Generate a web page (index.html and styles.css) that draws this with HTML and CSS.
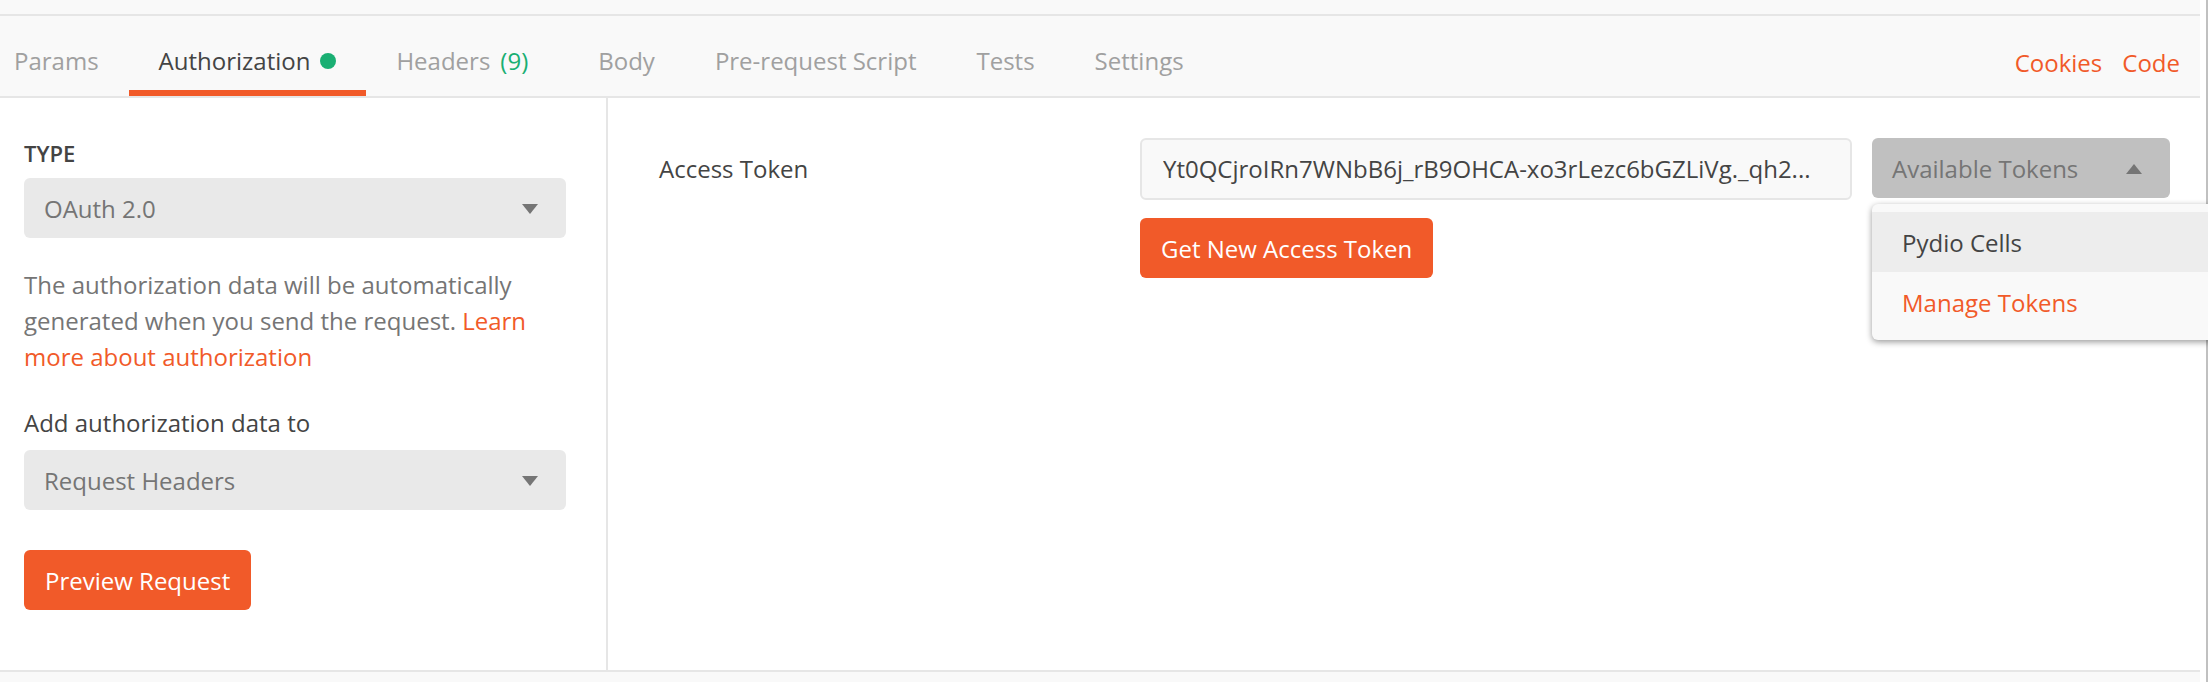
FILE: index.html
```html
<!DOCTYPE html>
<html lang="en">
<head>
<meta charset="utf-8">
<title>Authorization</title>
<link rel="stylesheet" href="styles.css">
</head>
<body>
<div class="app">
  <main class="request">
    <div class="strip strip-top"></div>
    <header class="tabbar">
      <nav class="tabs">
        <button class="tab" type="button">Params</button>
        <button class="tab tab-active" type="button">Authorization<span class="dot"></span></button>
        <button class="tab" type="button">Headers <span class="count">(9)</span></button>
        <button class="tab" type="button">Body</button>
        <button class="tab" type="button">Pre-request Script</button>
        <button class="tab" type="button">Tests</button>
        <button class="tab" type="button">Settings</button>
      </nav>
      <div class="links">
        <a class="link" href="#">Cookies</a>
        <a class="link" href="#">Code</a>
      </div>
    </header>
    <div class="panels">
      <section class="side">
        <label class="heading" for="type">TYPE</label>
        <div class="picker">
          <select class="select" id="type"><option>OAuth 2.0</option></select>
          <svg class="arrow" viewBox="0 0 16 10" aria-hidden="true"><path d="M0 0h16L8 10z"/></svg>
        </div>
        <p class="help">The authorization data will be automatically generated when you send the request. <a class="link" href="#">Learn more about authorization</a></p>
        <label class="label" for="target">Add authorization data to</label>
        <div class="picker">
          <select class="select" id="target"><option>Request Headers</option></select>
          <svg class="arrow" viewBox="0 0 16 10" aria-hidden="true"><path d="M0 0h16L8 10z"/></svg>
        </div>
        <button class="primary preview" type="button">Preview Request</button>
      </section>
      <section class="details">
        <label class="token-label" for="token">Access Token</label>
        <div class="token-field">
          <input class="token-input" id="token" type="text" value="Yt0QCjroIRn7WNbB6j_rB9OHCA-xo3rLezc6bGZLiVg._qh2...">
          <button class="primary" type="button">Get New Access Token</button>
        </div>
        <div class="dropdown">
          <button class="toggle" type="button" aria-expanded="true">Available Tokens
            <svg class="toggle-arrow" viewBox="0 0 16 10" aria-hidden="true"><path d="M0 10h16L8 0z"/></svg>
          </button>
          <div class="menu">
            <button class="item item-hover" type="button">Pydio Cells</button>
            <button class="item item-manage" type="button">Manage Tokens</button>
          </div>
        </div>
      </section>
    </div>
    <div class="strip strip-bottom"></div>
  </main>
</div>
</body>
</html>
```

FILE: styles.css
```css
* {
  box-sizing: border-box;
}

body {
  margin: 0;
  overflow: hidden;
  background: #fff;
}

body,
button,
input,
select {
  font-family: "Open Sans", "Noto Sans", sans-serif;
  font-size: 24px;
  line-height: 36px;
  color: #444;
}

button {
  padding: 0;
  border: 0;
  background: none;
  text-align: left;
  white-space: nowrap;
}

.app {
  min-height: 100vh;
  display: flex;
  padding-right: 6px;
  border-right: 2px solid #c0c0c0;
}

.request {
  flex: 1;
  min-width: 0;
  display: flex;
  flex-direction: column;
}

.strip {
  background: #f9f9f9;
}

.strip-top {
  height: 16px;
  border-bottom: 2px solid #e6e6e6;
}

.strip-bottom {
  height: 12px;
  border-top: 2px solid #e6e6e6;
}

.tabbar {
  display: flex;
  justify-content: space-between;
  height: 82px;
  padding-right: 20px;
  background: #f9f9f9;
  border-bottom: 2px solid #e6e6e6;
}

.tabs {
  display: flex;
  margin-left: -16px;
}

.tab {
  display: flex;
  align-items: center;
  gap: 10px;
  padding: 16px 30px 0;
  border-bottom: 6px solid transparent;
  color: #a0a0a0;
}

.tab-active {
  border-bottom-color: #f15a29;
  color: #444;
}

.dot {
  width: 16px;
  height: 16px;
  border-radius: 50%;
  background: #1aaf73;
}

.count {
  margin-right: 10px;
  color: #1aaf73;
}

.links {
  display: flex;
  align-items: center;
  gap: 20px;
  padding-top: 14px;
}

.link {
  color: #f15a29;
  text-decoration: none;
}

.panels {
  flex: 1;
  display: flex;
}

.side {
  width: 608px;
  flex: none;
  display: flex;
  flex-direction: column;
  padding: 37px 40px 40px 24px;
  border-right: 2px solid #e6e6e6;
}

.heading {
  margin-bottom: 7px;
  font-size: 22px;
  font-weight: 600;
}

.picker {
  position: relative;
}

.select {
  display: block;
  width: 100%;
  height: 60px;
  padding: 2px 60px 0 20px;
  border: 0;
  border-radius: 6px;
  appearance: none;
  background: #e9e9e9;
  color: #757575;
}

.arrow {
  position: absolute;
  top: 26px;
  right: 28px;
  width: 16px;
  height: 10px;
  fill: #757575;
  pointer-events: none;
}

.help {
  margin: 29px 0 30px;
  color: #757575;
}

.label {
  margin-bottom: 9px;
}

.primary {
  height: 60px;
  padding: 2px 21px 0;
  border-radius: 6px;
  background: #f15a29;
  color: #fff;
}

.preview {
  align-self: flex-start;
  margin-top: 40px;
}

.details {
  flex: 1;
  min-width: 0;
  display: grid;
  grid-template-columns: 481px 1fr 298px;
  align-items: start;
  padding: 40px 30px 40px 51px;
}

.token-label {
  padding-top: 13px;
}

.token-field {
  display: flex;
  flex-direction: column;
  align-items: flex-start;
  gap: 18px;
  padding-right: 20px;
}

.token-input {
  width: 100%;
  height: 62px;
  padding: 0 21px 2px;
  border: 2px solid #e6e6e6;
  border-radius: 6px;
  background: #f9f9f9;
  text-overflow: ellipsis;
}

.dropdown {
  position: relative;
}

.toggle {
  display: flex;
  align-items: center;
  justify-content: space-between;
  width: 100%;
  height: 60px;
  padding: 2px 28px 0 20px;
  border-radius: 6px;
  background: #c0c0c0;
  color: #757575;
}

.toggle-arrow {
  width: 16px;
  height: 10px;
  fill: #757575;
}

.menu {
  position: absolute;
  top: 66px;
  left: 0;
  width: 360px;
  padding: 8px 0;
  border-radius: 6px;
  background: #f9f9f9;
  box-shadow: 0 2px 6px rgba(0, 0, 0, 0.4);
}

.item {
  display: block;
  width: 100%;
  height: 60px;
  padding: 2px 30px 0;
}

.item-hover {
  background: #ededed;
}

.item-manage {
  color: #f15a29;
}
```
